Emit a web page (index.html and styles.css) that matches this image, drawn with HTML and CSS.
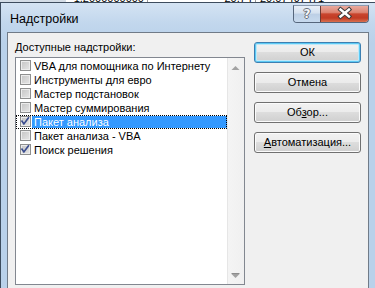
FILE: index.html
```html
<!DOCTYPE html>
<html lang="ru">
<head>
<meta charset="utf-8">
<title>Надстройки</title>
<link rel="stylesheet" href="styles.css">
</head>
<body>
<div class="screen">
  <div class="strip">
    <span class="cell c0"></span>
    <span class="cell c1">1,2000000000</span>
    <span class="cell c2">20,74</span>
    <span class="cell c3">20,07497471</span>
  </div>
  <div class="window">
    <div class="titlebar">
      <span class="title">Надстройки</span>
      <div class="caption">
        <div class="cap-help">?</div>
        <div class="cap-close">
          <svg width="47" height="16" viewBox="0 0 47 16">
            <path d="M19.5 3.5 L28 10.5 M28 3.5 L19.5 10.5" stroke="#3a3a3a" stroke-width="4.4" stroke-linecap="square" fill="none"/>
            <path d="M19.5 3.5 L28 10.5 M28 3.5 L19.5 10.5" stroke="#ffffff" stroke-width="2.4" stroke-linecap="square" fill="none"/>
          </svg>
        </div>
      </div>
    </div>
    <div class="client">
      <div class="left">
        <div class="label"><u>Д</u>оступные надстройки:</div>
        <div class="listbox">
          <div class="items">
            <div class="item"><span class="cb"></span><span class="text">VBA для помощника по Интернету</span></div>
            <div class="item"><span class="cb"></span><span class="text">Инструменты для евро</span></div>
            <div class="item"><span class="cb"></span><span class="text">Мастер подстановок</span></div>
            <div class="item"><span class="cb"></span><span class="text">Мастер суммирования</span></div>
            <div class="item selected"><span class="cb"><svg width="11" height="11" viewBox="0 0 11 11"><path d="M1.5 4.6 L3.9 7.9 L8.9 1.2" stroke="#3b4d8f" stroke-width="1.7" fill="none"/></svg></span><span class="text">Пакет анализа</span></div>
            <div class="item"><span class="cb"></span><span class="text">Пакет анализа - VBA</span></div>
            <div class="item"><span class="cb"><svg width="11" height="11" viewBox="0 0 11 11"><path d="M1.5 4.6 L3.9 7.9 L8.9 1.2" stroke="#3b4d8f" stroke-width="1.7" fill="none"/></svg></span><span class="text">Поиск решения</span></div>
          </div>
          <div class="vscroll">
            <svg width="9" height="4" viewBox="0 0 9 4"><polygon points="0.5,4 8.5,4 4.5,0" fill="#a2a2a2"/></svg>
            <svg width="9" height="5" viewBox="0 0 9 5"><rect x="0.5" y="0" width="8" height="1" fill="#8c8c8c"/><polygon points="0.5,1 8.5,1 4.5,5" fill="#a2a2a2"/></svg>
          </div>
        </div>
      </div>
      <div class="buttons">
        <button class="btn default">ОК</button>
        <button class="btn">Отмена</button>
        <button class="btn">Об<u>з</u>ор...</button>
        <button class="btn"><u>А</u>втоматизация...</button>
      </div>
    </div>
  </div>
</div>
</body>
</html>
```
FILE: styles.css
```css
* { box-sizing: border-box; }

body {
  margin: 0;
  width: 375px;
  height: 288px;
  overflow: hidden;
  background: #b9d1ea;
  font-family: "Liberation Sans", Arial, sans-serif;
  font-size: 11px;
  color: #000;
}

.screen {
  display: flex;
  flex-direction: column;
  height: 288px;
}

.strip {
  flex: none;
  height: 2px;
  overflow: hidden;
  display: flex;
  background: #ffffff;
}

.cell {
  display: block;
  margin-top: -7px;
  line-height: 11px;
  height: 11px;
  font-size: 11px;
  white-space: nowrap;
  border-right: 1px solid #9a9a9a;
}

.c0 { width: 66px; background: #d3dce6; border-right: none; }
.c1 { width: 82px; text-align: right; padding-right: 3px; }
.c2 { width: 108px; text-align: right; padding-right: 3px; }
.c3 { flex: 1; padding-left: 4px; border-right: none; }

.window {
  flex: 1;
  min-height: 0;
  display: flex;
  flex-direction: column;
  border-top: 1px solid #3d4c5e;
  border-left: 1px solid #3d4c5e;
  padding: 0 6px 0 6px;
  background: linear-gradient(#d4e3f3, #c2d7ed 20px, #b9d1ea 40px);
}

.titlebar {
  flex: none;
  height: 29px;
  display: flex;
  justify-content: space-between;
  align-items: flex-start;
}

.title {
  margin: 9px 0 0 3px;
  font-size: 12.5px;
  line-height: 14px;
  color: #000;
}

.caption {
  margin-top: 2px;
  display: flex;
  height: 18px;
  border: 1px solid #56667c;
  border-top-color: #8d9cb0;
  border-radius: 0 0 4px 4px;
  overflow: hidden;
}

.cap-help {
  width: 26px;
  height: 16px;
  background: linear-gradient(#e9f0f8, #d5e1ef 45%, #bccfe5 50%, #c8daee);
  text-align: center;
  font-family: "DejaVu Sans", sans-serif;
  font-weight: bold;
  font-size: 12px;
  line-height: 16px;
  color: #f4f6f9;
  text-shadow: 1px 0 #6a6f78, -1px 0 #6a6f78, 0 1px #6a6f78, 0 -1px #6a6f78;
}

.cap-close {
  width: 48px;
  height: 16px;
  border-left: 1px solid #6b3a33;
  background: linear-gradient(#e9aa9e, #dd8573 40%, #c9452e 50%, #c13b24 75%, #d9704f);
}

.cap-close svg { display: block; }

.client {
  flex: 1;
  display: flex;
  gap: 9px;
  padding: 8px 7px 0 7px;
  background: #f0f0f0;
  border: 1px solid #707b88;
  border-bottom: none;
}

.left {
  width: 230px;
  display: flex;
  flex-direction: column;
}

.label {
  height: 13px;
  line-height: 13px;
  margin-bottom: 3px;
  white-space: nowrap;
}

.listbox {
  height: 228px;
  border: 1px solid #828790;
  background: #fff;
  display: flex;
}

.items {
  flex: 1;
  padding-top: 1px;
  display: flex;
  flex-direction: column;
}

.item {
  height: 14px;
  display: flex;
  align-items: flex-start;
  padding-left: 4px;
}

.cb {
  width: 11px;
  height: 11px;
  margin-top: 1px;
  margin-right: 1px;
  border: 1px solid #8e8f8f;
  background: linear-gradient(135deg, #c4c4c4, #e6e6e6);
  box-shadow: inset 0 0 0 1px #ececec;
  position: relative;
}

.cb svg {
  position: absolute;
  left: -1px;
  top: -1px;
}

.text {
  flex: 1;
  height: 12px;
  margin-top: 1px;
  padding-left: 2px;
  line-height: 12px;
  white-space: nowrap;
}

.item.selected {
  outline: 1px dotted #000;
  outline-offset: -1px;
}

.item.selected .text {
  background: #3399ff;
  color: #fff;
}

.vscroll {
  width: 17px;
  display: flex;
  flex-direction: column;
  justify-content: space-between;
  align-items: center;
  padding: 8px 0 6px 0;
  background: linear-gradient(to right, #e6e6e6 0, #e6e6e6 1px, #f4f4f4 1px, #f0f0f0);
}

.vscroll svg { display: block; }

.buttons {
  width: 107px;
  display: flex;
  flex-direction: column;
  gap: 9px;
  padding-top: 1px;
}

.btn {
  width: 107px;
  height: 21px;
  padding: 0;
  border: 1px solid #707070;
  border-radius: 3px;
  background: linear-gradient(#f2f2f2, #ebebeb 50%, #dddddd 50%, #cfcfcf);
  box-shadow: inset 0 0 0 1px #fbfbfb;
  font-family: "Liberation Sans", Arial, sans-serif;
  font-size: 11px;
  line-height: 19px;
  color: #000;
  text-align: center;
}

.btn.default {
  border-color: #3c7fb1;
  box-shadow: inset 0 0 0 1px #5ccaf5, inset 0 0 0 2px #bfe8f8;
}
```
